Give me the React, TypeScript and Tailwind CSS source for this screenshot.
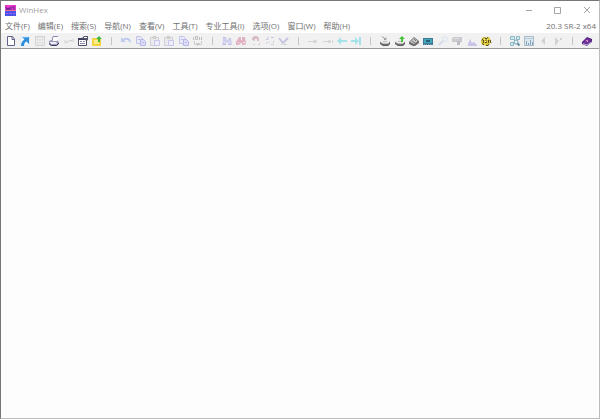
import { ReactNode } from 'react'

interface ToolItem {
  label: string
  icon: ReactNode
}

const MENUS = [
  '文件(F)',
  '编辑(E)',
  '搜索(S)',
  '导航(N)',
  '查看(V)',
  '工具(T)',
  '专业工具(I)',
  '选项(O)',
  '窗口(W)',
  '帮助(H)',
]

// Two overlapping pages, shared by the clipboard commands
const pages = (
  <>
    <path d="M1.5 1.5h4l2 2v5h-6z" fill="#e9e9fa" stroke="#c3c3ea" />
    <path d="M5.5 4.5h3l2 2v4h-5z" fill="#dcdcf8" stroke="#b7b7e8" />
    <path d="M7 7.5h2M3 4.500h2" stroke="#bcbcea" />
  </>
)

const clipboard = (
  <>
    <path d="M1.5 2.5h8v8h-8z" fill="#ebeaf0" stroke="#d0ceda" />
    <path d="M4 1.5h3v2H4z" fill="#ddd9d2" stroke="#cfcbc6" />
    <path d="M5.5 5.5h5v5h-5z" fill="#ececfa" stroke="#c6c6e8" />
  </>
)

// Flat drive with a bright lid and a dark lower edge
const disk = (
  <>
    <path d="M1 7l2-1h6l2 1v2l-2 2H4L1 9z" fill="#5c5c5c" />
    <path d="M1 7l2-2h6l2 2-2 2H4z" fill="#ececec" />
    <path d="M1 7.5l3 1.5h5l2-2" fill="none" stroke="#8a8a8a" />
    <path d="M4 6.500h4" stroke="#bdbdbd" />
  </>
)

// null marks a separator
const TOOLS: (ToolItem | null)[] = [
  {
    label: 'New',
    icon: <path d="M2.5 1.5h5l2 2.5v6.5h-7zM7 1.5v3h2.5" fill="#fff" stroke="#62628c" />,
  },
  {
    label: 'Open',
    icon: (
      <>
        <path d="M1.500 1.500h9v9h-9z" fill="#f4f9fd" stroke="#dfeaf3" />
        <path d="M3 2h7v7L7.500 6.500C5.500 7.500 5 9 5 11H2c0-3 1-5 3.500-6.500z" fill="#2f8fdd" />
        <path d="M4 2.500h5" stroke="#63b4ee" />
      </>
    ),
  },
  {
    label: 'Save',
    icon: (
      <>
        <path d="M1.5 1.5h9v9h-9z" fill="#ececec" stroke="#d4d4d4" />
        <path d="M3.5 2v3h5V2M3.5 10V7.5h5V10" fill="none" stroke="#dedede" />
      </>
    ),
  },
  {
    label: 'Print',
    icon: (
      <>
        <path d="M1 6l2-1h6l2 2v2l-2 2H3L1 9z" fill="#9c9cba" />
        <path d="M4 6l1-5h5L9 6z" fill="#fff" />
        <path d="M4 6l1-4.500h5" fill="none" stroke="#8888aa" />
        <path d="M2 7h6l1 1.500-1 .500H3z" fill="#ededf6" />
        <path d="M1 8.500L3.500 10.500h5L11 8" fill="none" stroke="#3c3c5c" />
      </>
    ),
  },
  {
    label: 'Properties',
    icon: (
      <>
        <path d="M1.5 8V5l2 2h2M10.5 4v3l-2-1h-2" fill="none" stroke="#e0e0e0" />
        <path d="M2 8l3-2M6 6l4-1" stroke="#cacaca" />
      </>
    ),
  },
  {
    label: 'Edit properties',
    icon: (
      <>
        <path d="M1.5 3.5h8v7h-8z" fill="#fff" stroke="#4c4c6a" />
        <path d="M1 4h8" stroke="#3c3c5c" strokeWidth="2" />
        <path d="M3 6.5h2M6 6.5h2M3 8.5h5" stroke="#8c8ca6" />
        <path d="M5 3l2-2h4v4L9 6 8 4H5z" fill="#55556b" />
        <path d="M7 2.5h3" stroke="#fff" />
      </>
    ),
  },
  {
    label: 'Open folder',
    icon: (
      <>
        <path d="M1 3h4l1 1h4v7H2l-1-1z" fill="#f5d33f" />
        <path d="M3 5h5v4H3z" fill="#ffeb8a" />
        <path d="M5 4l3-3 3 3H9v3H7V4z" fill="#42b83c" />
      </>
    ),
  },
  null,
  {
    label: 'Undo',
    icon: <path d="M1 2v5h5L4 5c3-1 5 0 6 3l1-2C9 2 6 2 3 4z" fill="#bccbed" />,
  },
  { label: 'Copy', icon: pages },
  { label: 'Paste', icon: clipboard },
  { label: 'Paste into new file', icon: clipboard },
  { label: 'Copy block', icon: pages },
  {
    label: 'Modify data',
    icon: (
      <>
        <path d="M1.5 2v3M3.5 1.5h2v3h-2zM7.5 2v3M9.5 2v3" fill="none" stroke="#bdbdbd" />
        <path d="M2.500 6v3.500h3M9.500 6v3.500h-3" fill="none" stroke="#cccccc" />
        <path d="M4 8l2 3 2-3z" fill="#c0c0ca" />
      </>
    ),
  },
  null,
  {
    label: 'Find text',
    icon: (
      <>
        <path d="M2 2h3l1 3 3-2h1l1 7H7V8L5 7v3H1l1-4z" fill="#d0d0ee" />
        <path d="M2 2.5h2M8 3.500h2M2 9.500h3M8 9.500h2" stroke="#bdbde0" />
        <path d="M3 7.5h1M8 7.5h1" stroke="#eeeefa" />
      </>
    ),
  },
  {
    label: 'Find hex values',
    icon: (
      <>
        <path d="M4 2h2v3h1V2h3l1 6-1 2H7V8H6L4 10H1V7z" fill="#e2b3c1" />
        <path d="M3 7.5h1M8 7.5h2" stroke="#f8e7ed" />
      </>
    ),
  },
  {
    label: 'Replace text',
    icon: (
      <>
        <path d="M2 5V3l2-2h3l2 2v3H7V4H5v2z" fill="#d8bcc6" />
        <path d="M3 9.5h2M8 9.5h2M9.500 7v2" stroke="#dbd3d8" />
      </>
    ),
  },
  {
    label: 'Replace hex values',
    icon: (
      <>
        <path d="M2 4.5h2v-3M7 2.5h3" fill="none" stroke="#c5c5e2" />
        <path d="M2.5 7v2M4 7.500h2M7 9.500h3M9.500 6v2" fill="none" stroke="#d0d0de" />
      </>
    ),
  },
  {
    label: 'Search again',
    icon: (
      <>
        <path d="M1 3l4 5 5-5" fill="none" stroke="#c6c6e2" strokeWidth="2" />
        <path d="M3 10l3-3M6 9.5h3" stroke="#ceced8" />
      </>
    ),
  },
  null,
  {
    label: 'Go to offset',
    icon: <path d="M1 6.5h6M7 5l3 1.500L7 8z" fill="#d0d0d0" stroke="#d5d5d5" />,
  },
  {
    label: 'Go to sector',
    icon: <path d="M1 6.5h6M7 5l2 1.500L7 8zM10.5 5v3" fill="#cecece" stroke="#d3d3d6" />,
  },
  { label: 'Back', icon: <path d="M1 6l4-4v3h6v2H5v3z" fill="#a4e2e8" /> },
  { label: 'Forward', icon: <path d="M1 5h4V2l4 4-4 4V7H1zM9 2h2v8H9z" fill="#a4e2e8" /> },
  null,
  {
    label: 'Open disk',
    icon: (
      <>
        {disk}
        <path d="M3 1.5l4 3M7 2.500v2H5" fill="none" stroke="#999999" />
      </>
    ),
  },
  {
    label: 'Clone disk',
    icon: (
      <>
        {disk}
        <path d="M5 4l3-3 3 3H9v3H7V4z" fill="#45c438" />
      </>
    ),
  },
  {
    label: 'Disk image',
    icon: (
      <>
        <path d="M1 7l5-5 5 4v2l-4 3H5L1 9z" fill="#6e6e6e" />
        <path d="M2 7l4-4 4 3-4 3z" fill="#c9c9c9" />
        <path d="M4 6l3 2M6 4l2 2" stroke="#777777" />
      </>
    ),
  },
  {
    label: 'Open memory',
    icon: (
      <>
        <path d="M1 3h10v7H1z" fill="#3f7898" />
        <path d="M2 4h8v4H2z" fill="#3fa9b8" />
        <path d="M4 5h4v2H4z" fill="#28607b" />
        <path d="M2 9.5h8" stroke="#7da3a8" strokeDasharray="1 1" />
      </>
    ),
  },
  {
    label: 'Analyze',
    icon: (
      <>
        <circle cx="8" cy="4" r="2.5" fill="#edf2f8" stroke="#dbe5ee" />
        <path d="M6 6l-4 4" stroke="#d4dae6" strokeWidth="2" />
      </>
    ),
  },
  {
    label: 'Gather text',
    icon: (
      <>
        <path d="M2 2h9v5L8 8l-2 2V7H1V4z" fill="#cccad0" />
        <path d="M3 3.5h5" stroke="#e0dfe2" />
        <path d="M6 6h3v4H6z" fill="#bebbc2" />
      </>
    ),
  },
  {
    label: 'Histogram',
    icon: <path d="M2 11V9l2-5 2 4 2-1 3 3v1z" fill="#c9c5e6" />,
  },
  {
    label: 'Options',
    icon: (
      <>
        <path d="M3 2h2l1 1 1-1h2l1 2 1 1v3l-2 1-1 2H6L5 10H3L2 9 1 8V5l1-1z" fill="#e0c83b" />
        <path d="M2 5.500l1-2M5 2.500L6 4l2-1.500M10 5l1 3M2 8.500l2 1.500M6 10.500h2l1-1.500" fill="none" stroke="#4c4618" />
        <path d="M3.5 5v3M8.5 5v3M5 7.5h2M6 4.500v2" stroke="#5a5328" />
        <path d="M4 4.5h1M7 4.5h1M5 6.500h1" stroke="#fff3a0" />
      </>
    ),
  },
  null,
  {
    label: 'Directory browser',
    icon: (
      <>
        <path d="M1.5 1.5h4v3h-4zM7.5 1.5h3v3h-3zM1.5 7.5h3v3h-3z" fill="#d4e9ee" stroke="#8db8c5" />
        <circle cx="7" cy="7" r="2" fill="#eef8fa" stroke="#6f9fb2" />
        <path d="M8.5 8.5l2 2" stroke="#628da3" strokeWidth="2" />
      </>
    ),
  },
  {
    label: 'Calculator',
    icon: (
      <>
        <path d="M1.5 1.5h9v9h-9z" fill="#dce8f0" stroke="#a9bccb" />
        <path d="M2 3.5h8" stroke="#b9cbd8" />
        <path d="M3.5 6v4M5.5 8v2M7.5 5v5M9.5 7v3" stroke="#8ca7bc" />
      </>
    ),
  },
  { label: 'Previous', icon: <path d="M8 2v8L4 6z" fill="#cdd2d6" /> },
  { label: 'Next', icon: <path d="M3 2v9l4-5zM8 3h2v2H8z" fill="#cfd1d4" /> },
  null,
  {
    label: 'Help',
    icon: (
      <>
        <path d="M1 7l5-5 5 2v3l-5 4-5-2z" fill="#4f2478" />
        <path d="M2 7l4-4 4 2-4 4z" fill="#7430a0" />
        <path d="M2 8.5l4 1.500 4.500-3" fill="none" stroke="#cfbfe0" />
        <path d="M5 5.500l2 .500-1 1" fill="none" stroke="#dda8c0" />
      </>
    ),
  },
]

function TitleBar() {
  return (
    <header className="flex h-[18px] items-center pr-[6px] pl-1">
      <svg className="h-[11px] w-[11px]" viewBox="0 0 11 11" aria-hidden="true">
        <path d="M0 0h11v6H0z" fill="#e638c4" />
        <path d="M0 6h11v5H0z" fill="#4b54e8" />
        <path d="M1 2l1 3 1-2 1 2 1-3M6 2v3M7 2h3M8 4h2" fill="none" stroke="#642493" />
        <path d="M1 8.5h2M4 8.5h3M8 8.5h2" stroke="#a55af2" />
        <path d="M0 5.5h11" stroke="#f36a9f" />
      </svg>
      <h1 className="ml-[3px] flex-1 text-[8px] leading-3 text-[#a0a0a0]">WinHex</h1>
      <div className="flex gap-[17px] text-[#a4a4a4]">
        <button type="button" aria-label="Minimize" className="h-3 w-3">
          <svg viewBox="0 0 12 12" fill="none" stroke="currentColor">
            <path d="M3 6.5h6" />
          </svg>
        </button>
        <button type="button" aria-label="Maximize" className="h-3 w-3">
          <svg viewBox="0 0 12 12" fill="none" stroke="currentColor">
            <path d="M2.5 3.5h6v6h-6z" />
          </svg>
        </button>
        <button type="button" aria-label="Close" className="h-3 w-3">
          <svg viewBox="0 0 12 12" fill="none" stroke="currentColor">
            <path d="M3 3l6 6M9 3l-6 6" />
          </svg>
        </button>
      </div>
    </header>
  )
}

function MenuBar() {
  return (
    <nav className="flex h-[14px] items-center justify-between pr-[3px] pl-1 text-[8px] leading-3 text-[#707070]">
      <div className="flex gap-2">
        {MENUS.map(menu => (
          <button key={menu} type="button" className="whitespace-nowrap">
            {menu}
          </button>
        ))}
      </div>
      <span className="whitespace-nowrap">20.3 SR-2 x64</span>
    </nav>
  )
}

function Toolbar() {
  return (
    <div
      role="toolbar"
      className="flex h-4 items-center justify-between border-b border-[#999999] bg-[#f1f1f1] pr-[6px] pl-1"
    >
      {TOOLS.map((tool, index) =>
        tool ? (
          <button key={index} type="button" aria-label={tool.label} className="h-3 w-3 shrink-0">
            <svg viewBox="0 0 12 12" fill="none">
              {tool.icon}
            </svg>
          </button>
        ) : (
          <div key={index} className="flex w-3 shrink-0 justify-center">
            <div className="h-2 w-px bg-[#c4c4c4]" />
          </div>
        )
      )}
    </div>
  )
}

export default function App() {
  return (
    <div className="flex min-h-screen flex-col border border-t-[#777777] border-r-[#bbbbbb] border-b-[#bbbbbb] border-l-[#777777] bg-white font-['Open_Sans','Noto_Sans_CJK_SC',sans-serif]">
      <TitleBar />
      <MenuBar />
      <Toolbar />
      <main className="flex-1 bg-[#fdfdfd]" />
    </div>
  )
}
